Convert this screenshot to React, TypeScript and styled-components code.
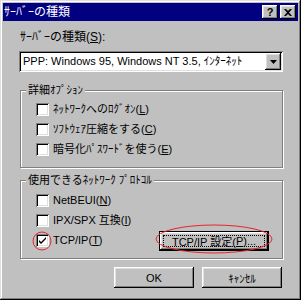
import { createGlobalStyle, styled } from 'styled-components';

const GlobalStyle = createGlobalStyle`
  html, body {
    margin: 0;
    padding: 0;
    background: #c0c0c0;
  }
  body {
    font-family: "Liberation Sans", "Noto Sans CJK JP", sans-serif;
    font-size: 11px;
    color: #000;
  }
`;

const raised = `
  box-shadow: inset -1px -1px #000, inset 1px 1px #fff, inset -2px -2px #808080, inset 2px 2px #dfdfdf;
`;

const sunken = `
  box-shadow: inset 1px 1px #808080, inset -1px -1px #fff, inset 2px 2px #000, inset -2px -2px #dfdfdf;
`;

const Window = styled.div`
  position: relative;
  width: 301px;
  height: 300px;
  box-sizing: border-box;
  padding: 3px;
  background: #c0c0c0;
  box-shadow: inset -1px -1px #000, inset 1px 1px #dfdfdf, inset -2px -2px #808080, inset 2px 2px #fff;
  display: flex;
  flex-direction: column;
`;

const TitleBar = styled.div`
  height: 18px;
  background: #000080;
  color: #fff;
  display: flex;
  align-items: center;
  padding: 0 2px 0 1px;
  gap: 2px;
`;

const Title = styled.span`
  flex: 1;
  font-size: 12px;
  line-height: 18px;
`;

const CaptionButton = styled.div`
  width: 16px;
  height: 14px;
  background: #c0c0c0;
  ${raised}
  display: flex;
  align-items: center;
  justify-content: center;
  color: #000;
  font-weight: bold;
  font-size: 11px;
  line-height: 14px;
`;

const Body = styled.div`
  display: flex;
  flex-direction: column;
  padding: 0 15px 0 16px;
`;

const Label = styled.div`
  margin-top: 9px;
  padding-left: 1px;
  line-height: 14px;
  font-size: 12px;
`;

const Combo = styled.div`
  margin-top: 7px;
  height: 21px;
  background: #fff;
  ${sunken}
  display: flex;
  align-items: center;
  padding: 2px 2px 2px 4px;
  box-sizing: border-box;
`;

const ComboText = styled.span`
  flex: 1;
  white-space: nowrap;
  overflow: hidden;
  line-height: 17px;
`;

const DropButton = styled.div`
  width: 16px;
  height: 17px;
  background: #c0c0c0;
  ${raised}
  display: flex;
  align-items: center;
  justify-content: center;
`;

const Group = styled.div<{ $top: number; $padTop: number }>`
  position: relative;
  margin-top: ${(p) => p.$top}px;
  margin-left: 1px;
  width: 263px;
  box-sizing: border-box;
  border: 1px solid #808080;
  box-shadow: inset 1px 1px #fff, 1px 1px #fff;
  padding: ${(p) => p.$padTop}px 13px 8px 15px;
  display: flex;
  flex-direction: column;
`;

const Legend = styled.span`
  position: absolute;
  top: -8px;
  left: 5px;
  padding: 0 2px;
  background: #c0c0c0;
  line-height: 14px;
`;

const Row = styled.div`
  height: 20px;
  display: flex;
  align-items: center;
  gap: 4px;
`;

const Box = styled.div`
  width: 13px;
  height: 13px;
  background: #fff;
  ${sunken}
  display: flex;
  align-items: center;
  justify-content: center;
  flex-shrink: 0;
`;

const RowText = styled.span`
  line-height: 14px;
  white-space: nowrap;
`;

const PushButton = styled.div<{ $width: number; $height: number }>`
  width: ${(p) => p.$width}px;
  height: ${(p) => p.$height}px;
  background: #c0c0c0;
  ${raised}
  display: flex;
  align-items: center;
  justify-content: center;
  box-sizing: border-box;
  white-space: nowrap;
`;

const DefaultButton = styled(PushButton)`
  margin-left: auto;
  margin-top: 1px;
  padding: 4px;
  box-shadow: inset 0 0 0 1px #000, inset -2px -2px #000, inset 2px 2px #fff, inset -3px -3px #808080, inset 3px 3px #dfdfdf;
`;

const Focus = styled.span`
  flex: 1;
  align-self: stretch;
  display: flex;
  align-items: center;
  justify-content: center;
  outline: 1px dotted #000;
  outline-offset: -1px;
`;

const Footer = styled.div`
  margin-top: 8px;
  display: flex;
  justify-content: flex-end;
  gap: 8px;
  padding-right: 1px;
`;

const Annotations = styled.svg`
  position: absolute;
  left: 0;
  top: 0;
  pointer-events: none;
`;

const Check = () => (
  <svg width="9" height="9" viewBox="0 0 9 9">
    <path d="M1 4 L3 6 L8 1 V3 L3 8 L1 6 Z" fill="#000" />
  </svg>
);

const CheckRow = ({ checked, children }: { checked?: boolean; children: React.ReactNode }) => (
  <Row>
    <Box>{checked && <Check />}</Box>
    <RowText>{children}</RowText>
  </Row>
);

export default function App() {
  return (
    <>
      <GlobalStyle />
      <Window>
        <TitleBar>
          <Title>ｻｰﾊﾞｰの種類</Title>
          <CaptionButton>?</CaptionButton>
          <CaptionButton>
            <svg width="8" height="7" viewBox="0 0 8 7">
              <path d="M0 0 H2 L4 2 L6 0 H8 L5 3.5 L8 7 H6 L4 5 L2 7 H0 L3 3.5 Z" fill="#000" />
            </svg>
          </CaptionButton>
        </TitleBar>
        <Body>
          <Label>
            ｻｰﾊﾞｰの種類(<u>S</u>):
          </Label>
          <Combo>
            <ComboText>PPP: Windows 95, Windows NT 3.5, ｲﾝﾀｰﾈｯﾄ</ComboText>
            <DropButton>
              <svg width="7" height="4" viewBox="0 0 7 4">
                <path d="M0 0 H7 L3.5 4 Z" fill="#000" />
              </svg>
            </DropButton>
          </Combo>
          <Group $top={18} $padTop={8}>
            <Legend>詳細ｵﾌﾟｼｮﾝ</Legend>
            <CheckRow>
              ﾈｯﾄﾜｰｸへのﾛｸﾞｵﾝ(<u>L</u>)
            </CheckRow>
            <CheckRow>
              ｿﾌﾄｳｪｱ圧縮をする(<u>C</u>)
            </CheckRow>
            <CheckRow>
              暗号化ﾊﾟｽﾜｰﾄﾞを使う(<u>E</u>)
            </CheckRow>
          </Group>
          <Group $top={12} $padTop={9}>
            <Legend>使用できるﾈｯﾄﾜｰｸ ﾌﾟﾛﾄｺﾙ</Legend>
            <CheckRow>
              NetBEUI(<u>N</u>)
            </CheckRow>
            <CheckRow>
              IPX/SPX 互換(<u>I</u>)
            </CheckRow>
            <Row>
              <Box>
                <Check />
              </Box>
              <RowText>
                TCP/IP(<u>T</u>)
              </RowText>
              <DefaultButton $width={110} $height={20}>
                <Focus>
                  TCP/IP 設定(<u>P</u>)...
                </Focus>
              </DefaultButton>
            </Row>
          </Group>
          <Footer>
            <PushButton $width={80} $height={21}>OK</PushButton>
            <PushButton $width={80} $height={21}>ｷｬﾝｾﾙ</PushButton>
          </Footer>
        </Body>
        <Annotations width="301" height="300" viewBox="0 0 301 300">
          <circle cx="42" cy="241" r="9" fill="none" stroke="#e8252a" strokeWidth="1" />
          <ellipse cx="214" cy="239" rx="58" ry="14" fill="none" stroke="#e8252a" strokeWidth="1" />
        </Annotations>
      </Window>
    </>
  );
}
